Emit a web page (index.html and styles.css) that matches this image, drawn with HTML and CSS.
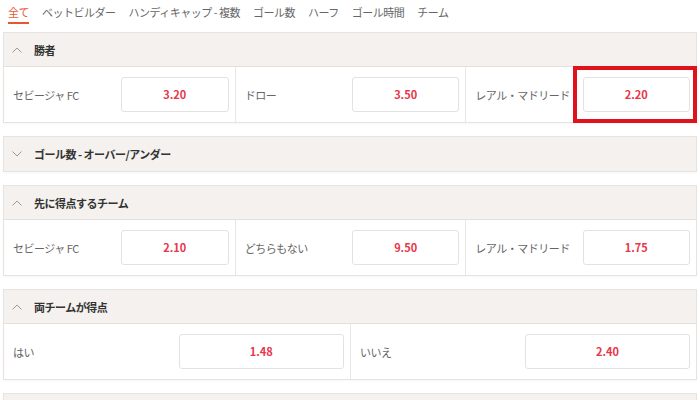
FILE: index.html
```html
<!DOCTYPE html>
<html lang="ja">
<head>
    <meta charset="UTF-8">
    <title>マーケット</title>
    <link rel="stylesheet" href="styles.css">
</head>
<body>
    <div class="page">
        <div class="tabs">
            <span class="tab active">全て</span>
            <span class="tab">ベットビルダー</span>
            <span class="tab">ハンディキャップ - 複数</span>
            <span class="tab">ゴール数</span>
            <span class="tab">ハーフ</span>
            <span class="tab">ゴール時間</span>
            <span class="tab">チーム</span>
        </div>

        <div class="market">
            <div class="market-head">
                <svg class="chev" width="10" height="6" viewBox="0 0 10 6"><polyline points="0.5,5.5 5,1 9.5,5.5"/></svg>
                <span>勝者</span>
            </div>
            <div class="outcomes three">
                <div class="outcome">
                    <span class="label">セビージャ FC</span>
                    <span class="odds">3.20</span>
                </div>
                <div class="outcome">
                    <span class="label">ドロー</span>
                    <span class="odds">3.50</span>
                </div>
                <div class="outcome">
                    <span class="label">レアル・マドリード</span>
                    <span class="odds marked">2.20</span>
                </div>
            </div>
        </div>

        <div class="market">
            <div class="market-head closed">
                <svg class="chev" width="10" height="6" viewBox="0 0 10 6"><polyline points="0.5,0.5 5,5 9.5,0.5"/></svg>
                <span>ゴール数 - オーバー/アンダー</span>
            </div>
        </div>

        <div class="market">
            <div class="market-head">
                <svg class="chev" width="10" height="6" viewBox="0 0 10 6"><polyline points="0.5,5.5 5,1 9.5,5.5"/></svg>
                <span>先に得点するチーム</span>
            </div>
            <div class="outcomes three">
                <div class="outcome">
                    <span class="label">セビージャ FC</span>
                    <span class="odds">2.10</span>
                </div>
                <div class="outcome">
                    <span class="label">どちらもない</span>
                    <span class="odds">9.50</span>
                </div>
                <div class="outcome">
                    <span class="label">レアル・マドリード</span>
                    <span class="odds">1.75</span>
                </div>
            </div>
        </div>

        <div class="market">
            <div class="market-head">
                <svg class="chev" width="10" height="6" viewBox="0 0 10 6"><polyline points="0.5,5.5 5,1 9.5,5.5"/></svg>
                <span>両チームが得点</span>
            </div>
            <div class="outcomes two">
                <div class="outcome">
                    <span class="label">はい</span>
                    <span class="odds">1.48</span>
                </div>
                <div class="outcome">
                    <span class="label">いいえ</span>
                    <span class="odds">2.40</span>
                </div>
            </div>
        </div>

        <!-- next market, only its top edge is in view -->
        <div class="market">
            <div class="market-head closed"></div>
        </div>
    </div>
</body>
</html>
```

FILE: styles.css
```css
body {
    margin: 0;
    background: #fff;
    font-family: "Noto Sans CJK JP", "Noto Sans", sans-serif;
    color: #333;
    letter-spacing: -0.5px;
    overflow: hidden;
}
.page {
    padding: 0 3px;
}
.tabs {
    display: flex;
    gap: 13px;
    padding: 0 5px;
    margin-bottom: 8px;
}
.tab {
    font-size: 11px;
    line-height: 14px;
    padding: 5px 0 3px;
    color: #666;
    border-bottom: 2px solid transparent;
}
.tab.active {
    color: #e8562e;
    border-bottom-color: #e8562e;
}
.market {
    border: 1px solid #e6e3e0;
    margin-bottom: 13px;
    box-shadow: 0 1px 2px rgba(0,0,0,0.04);
}
.market-head {
    display: flex;
    align-items: center;
    gap: 12px;
    height: 33px;
    padding: 0 8px;
    background: #f4f1ee;
    border-bottom: 1px solid #e2dfdc;
    font-size: 11px;
    font-weight: bold;
    color: #333;
}
.market-head.closed {
    border-bottom: none;
    height: 34px;
}
.chev {
    fill: none;
    stroke: #9a9a9a;
    stroke-width: 1;
}
.outcomes {
    display: grid;
    height: 55px;
}
.outcomes.three {
    grid-template-columns: repeat(3, 1fr);
}
.outcomes.two {
    grid-template-columns: repeat(2, 1fr);
}
.outcome {
    display: grid;
    grid-template-columns: 1fr 1fr;
    align-items: center;
    padding: 0 6px 0 9px;
    border-left: 1px solid #e8e8e8;
}
.outcome:first-child {
    border-left: none;
}
.label {
    font-size: 11px;
    color: #666;
    white-space: nowrap;
}
.odds {
    position: relative;
    height: 33px;
    line-height: 33px;
    text-align: center;
    border: 1px solid #e2e2e2;
    border-radius: 3px;
    background: #fff;
    font-size: 11px;
    font-weight: bold;
    letter-spacing: 0;
    color: #e8364a;
}
.odds.marked::after {
    content: "";
    position: absolute;
    top: -12px;
    bottom: -12px;
    left: -11px;
    right: -8px;
    border: 4px solid #e0121c;
}
```
